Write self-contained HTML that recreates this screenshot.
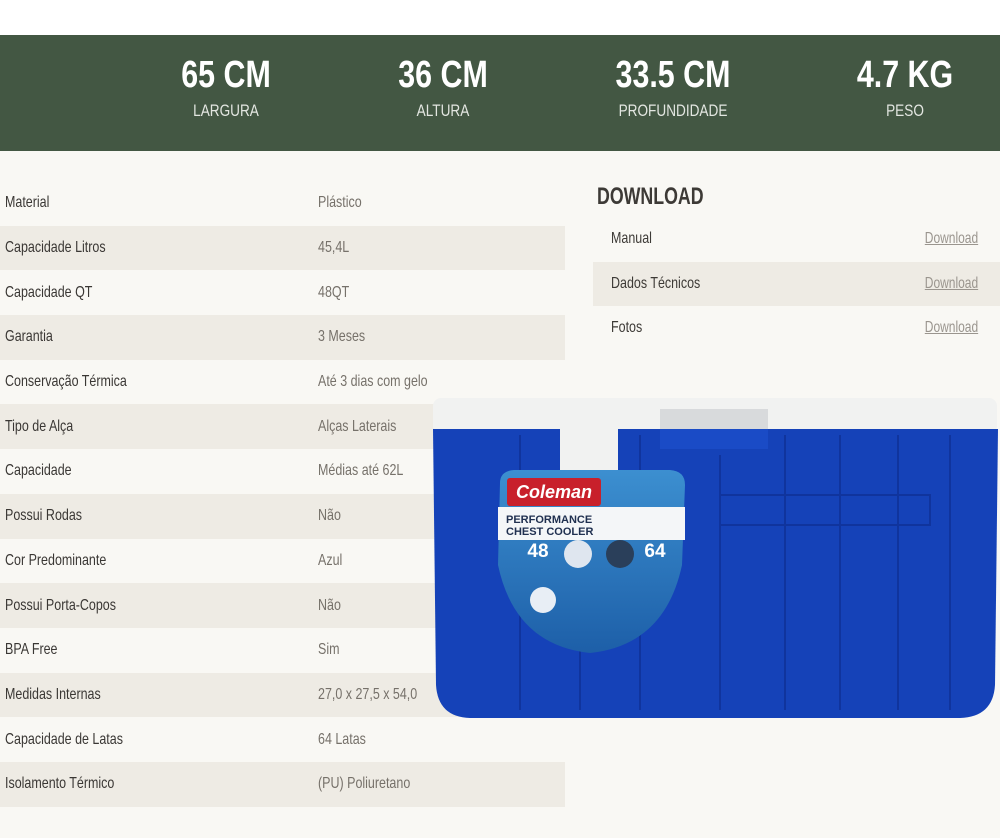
<!DOCTYPE html>
<html><head><meta charset="utf-8"><style>
*{margin:0;padding:0;box-sizing:border-box}
body{width:1000px;height:838px;background:#f9f8f4;font-family:"Liberation Sans",sans-serif;position:relative;overflow:hidden;color:#3d3a36}
.n{display:inline-block;transform:scaleX(.78);transform-origin:left center;white-space:nowrap}
.top{position:absolute;left:0;top:0;width:1000px;height:35px;background:#fff}
.band{position:absolute;left:0;top:35px;width:1000px;height:116px;background:#435743;color:#fff}
.st{position:absolute;top:20px;text-align:center;width:200px;margin-left:-100px}
.st b{display:block;font-size:38px;font-weight:bold;line-height:40px;transform:scaleX(.8)}
.st span{display:block;font-size:17px;color:#e3e6e1;margin-top:6px;transform:scaleX(.8)}
.tbl{position:absolute;left:0;top:181px;width:565px}
.r{height:44.7px;display:flex;align-items:center;font-size:16px}
.r:nth-child(even){background:#eeebe4}
.r .k{width:318px;padding-left:5px;color:#3a3734}
.r .v{color:#76716a}
.dl{position:absolute;left:593px;top:183px;width:407px}
.dl h2{font-size:24px;font-weight:bold;color:#3d3a36;padding-left:4px;height:34px}
.dl h2 .n{transform:scaleX(.74)}
.dr{height:44.5px;display:flex;align-items:center;justify-content:space-between;padding:0 22px 0 18px;font-size:16px}
.dr:nth-child(3){background:#eeebe4}
.dr a{color:#9a958e;text-decoration:underline;display:inline-block;transform:scaleX(.75);transform-origin:right center}
</style></head><body>
<div class="top"></div>
<div class="band">
<div class="st" style="left:226px"><b>65 CM</b><span>LARGURA</span></div>
<div class="st" style="left:443px"><b>36 CM</b><span>ALTURA</span></div>
<div class="st" style="left:673px"><b>33.5 CM</b><span>PROFUNDIDADE</span></div>
<div class="st" style="left:905px"><b>4.7 KG</b><span>PESO</span></div>
</div>
<div class="tbl">
<div class="r"><div class="k"><span class="n">Material</span></div><div class="v"><span class="n">Plástico</span></div></div>
<div class="r"><div class="k"><span class="n">Capacidade Litros</span></div><div class="v"><span class="n">45,4L</span></div></div>
<div class="r"><div class="k"><span class="n">Capacidade QT</span></div><div class="v"><span class="n">48QT</span></div></div>
<div class="r"><div class="k"><span class="n">Garantia</span></div><div class="v"><span class="n">3 Meses</span></div></div>
<div class="r"><div class="k"><span class="n">Conservação Térmica</span></div><div class="v"><span class="n">Até 3 dias com gelo</span></div></div>
<div class="r"><div class="k"><span class="n">Tipo de Alça</span></div><div class="v"><span class="n">Alças Laterais</span></div></div>
<div class="r"><div class="k"><span class="n">Capacidade</span></div><div class="v"><span class="n">Médias até 62L</span></div></div>
<div class="r"><div class="k"><span class="n">Possui Rodas</span></div><div class="v"><span class="n">Não</span></div></div>
<div class="r"><div class="k"><span class="n">Cor Predominante</span></div><div class="v"><span class="n">Azul</span></div></div>
<div class="r"><div class="k"><span class="n">Possui Porta-Copos</span></div><div class="v"><span class="n">Não</span></div></div>
<div class="r"><div class="k"><span class="n">BPA Free</span></div><div class="v"><span class="n">Sim</span></div></div>
<div class="r"><div class="k"><span class="n">Medidas Internas</span></div><div class="v"><span class="n">27,0 x 27,5 x 54,0</span></div></div>
<div class="r"><div class="k"><span class="n">Capacidade de Latas</span></div><div class="v"><span class="n">64 Latas</span></div></div>
<div class="r"><div class="k"><span class="n">Isolamento Térmico</span></div><div class="v"><span class="n">(PU) Poliuretano</span></div></div>
</div>
<div class="dl">
<h2><span class="n">DOWNLOAD</span></h2>
<div class="dr"><span class="n">Manual</span><a>Download</a></div>
<div class="dr"><span class="n">Dados Técnicos</span><a>Download</a></div>
<div class="dr"><span class="n">Fotos</span><a>Download</a></div>
</div>
<svg style="position:absolute;left:430px;top:395px" width="570" height="330" viewBox="0 0 570 330">
<defs><linearGradient id="lb" x1="0" y1="0" x2="0" y2="1"><stop offset="0" stop-color="#3c8fd0"/><stop offset="1" stop-color="#1d5fa8"/></linearGradient></defs>
<rect x="3" y="3" width="564" height="36" rx="8" fill="#f1f2f1"/>
<rect x="230" y="14" width="108" height="22" fill="#d8dadc"/>
<path d="M3 34 H568 L565 290 Q563 322 530 323 H40 Q8 322 6 290 Z" fill="#1542b8"/>
<g stroke="#0e2f92" stroke-width="2" fill="none" opacity=".7">
<path d="M90 40 V315 M150 40 V315 M210 40 V315 M290 60 V315 M355 40 V315 M410 40 V315 M468 40 V315 M520 40 V315"/>
<rect x="290" y="100" width="210" height="30"/>
</g>
<rect x="230" y="34" width="108" height="20" fill="#1a4bc6"/>
<rect x="130" y="34" width="58" height="48" fill="#f1f2f1"/>
<path d="M70 88 Q70 76 84 75 L240 75 Q255 76 255 90 L252 170 Q235 250 160 258 Q85 250 68 170 Z" fill="url(#lb)"/>
<path d="M68 112 H255 V145 H68 Z" fill="#f4f6f8"/>
<rect x="77" y="83" width="94" height="28" rx="3" fill="#c8202b"/>
<text x="124" y="103" font-family="Liberation Sans" font-weight="bold" font-style="italic" font-size="18" fill="#fff" text-anchor="middle">Coleman</text>
<text x="76" y="128" font-family="Liberation Sans" font-weight="bold" font-size="11" fill="#203050">PERFORMANCE</text>
<text x="76" y="140" font-family="Liberation Sans" font-weight="bold" font-size="11" fill="#203050">CHEST COOLER</text>
<text x="108" y="162" font-family="Liberation Sans" font-weight="bold" font-size="19" fill="#fff" text-anchor="middle">48</text>
<text x="225" y="162" font-family="Liberation Sans" font-weight="bold" font-size="19" fill="#fff" text-anchor="middle">64</text>
<circle cx="148" cy="159" r="14" fill="#dfe6ef"/><circle cx="190" cy="159" r="14" fill="#2a3f5a"/>
<circle cx="113" cy="205" r="13" fill="#e8eef5"/>
</svg>
</body></html>
